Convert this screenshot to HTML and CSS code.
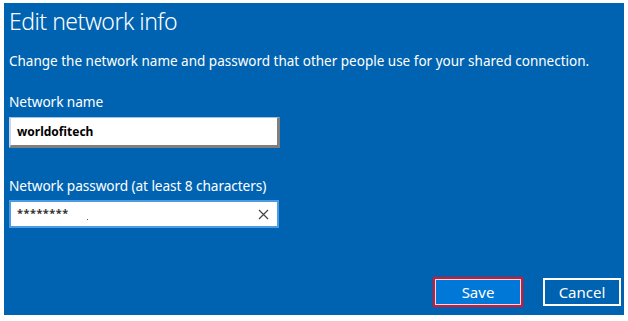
FILE: index.html
```html
<!DOCTYPE html>
<html lang="en">
<head>
    <meta charset="UTF-8">
    <title>Edit network info</title>
    <link rel="stylesheet" href="styles.css">
</head>
<body>
    <div class="panel">
        <h1>Edit network info</h1>
        <p class="intro">Change the network name and password that other people use for your shared connection.</p>

        <div class="form-group first">
            <label for="netName">Network name</label>
            <div class="field name-field">
                <span class="value">worldofitech</span>
            </div>
        </div>

        <div class="form-group second">
            <label for="netPass">Network password (at least 8 characters)</label>
            <div class="field pass-field">
                <span class="value stars">********</span>
                <span class="speck"></span>
                <svg class="clear" width="11" height="11" viewBox="0 0 11 11">
                    <path d="M1 1 L10 10 M10 1 L1 10" stroke="#444" stroke-width="1.2" fill="none"/>
                </svg>
            </div>
        </div>

        <div class="actions">
            <button class="btn save">Save</button>
            <button class="btn cancel">Cancel</button>
        </div>
    </div>
</body>
</html>
```

FILE: styles.css
```css
body {
    margin: 3px 4px;
    background: #ffffff;
    font-family: "Noto Sans", "Open Sans", sans-serif;
}
.panel {
    width: 620px;
    height: 312px;
    box-sizing: border-box;
    background-color: #0063b1;
    color: #ffffff;
    padding: 0 3px 8px 5px;
    display: flex;
    flex-direction: column;
}
h1 {
    margin: 4px 0 0;
    font-size: 23px;
    font-weight: 300;
    letter-spacing: -0.5px;
    line-height: 29px;
}
.intro {
    margin: 16px 0 0;
    font-size: 13.5px;
    line-height: 18px;
}
.form-group label {
    display: block;
    font-size: 13.7px;
    letter-spacing: -0.1px;
    line-height: 18px;
}
.first {
    margin-top: 23px;
}
.second {
    margin-top: 29px;
}
.field {
    margin-top: 6px;
    box-sizing: border-box;
    background: #ffffff;
    color: #000000;
    display: flex;
    align-items: center;
    position: relative;
}
.name-field {
    width: 271px;
    height: 31px;
    border-top: 1px solid #9dc3ea;
    border-left: 2px solid #c8d6e6;
    border-right: 3px solid #7f7f7f;
    border-bottom: 3px solid #7f7f7f;
    padding-left: 6px;
}
.name-field .value {
    font-size: 12px;
    font-weight: 700;
}
.pass-field {
    width: 270px;
    height: 28px;
    margin-top: 5px;
    border: 2px solid #4d9be0;
    padding: 0 8px 0 6px;
}
.stars {
    font-size: 11px;
    font-weight: 700;
    letter-spacing: 0.5px;
    color: #333;
    margin-top: -3px;
}
.speck {
    position: absolute;
    left: 76px;
    top: 17px;
    width: 1px;
    height: 1px;
    background: #555;
}
.clear {
    margin-left: auto;
}
.actions {
    margin-top: auto;
    display: flex;
    justify-content: flex-end;
    gap: 20px;
}
.btn {
    height: 30px;
    box-sizing: border-box;
    color: #ffffff;
    font-family: "Noto Sans", "Open Sans", sans-serif;
    font-size: 15px;
    cursor: pointer;
}
.save {
    width: 90px;
    background-color: #0078d7;
    border: 2px solid #e81123;
    box-shadow: inset 0 0 0 1px #cfe4f7;
}
.cancel {
    width: 78px;
    height: 28px;
    margin-top: 1px;
    background-color: #0063b1;
    border: 2px solid #ffffff;
}
```
